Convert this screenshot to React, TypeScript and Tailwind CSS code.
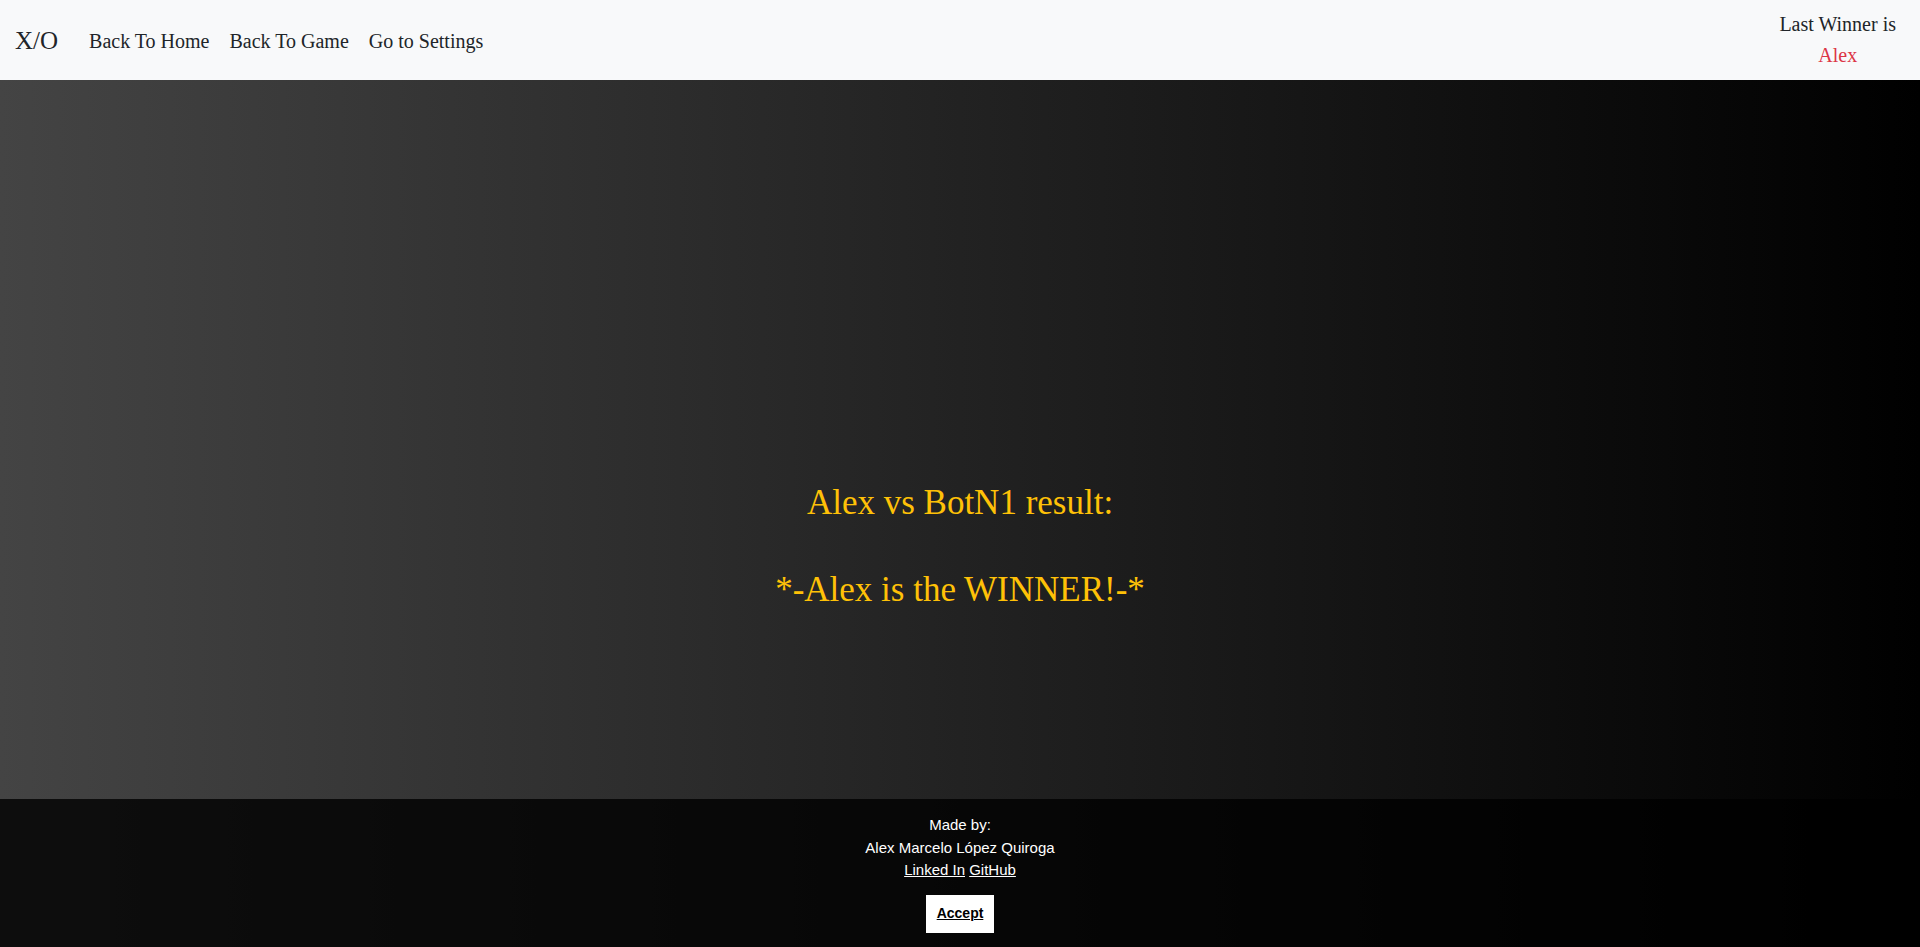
import React from "react";

export default function App() {
  return (
    <div className="w-full h-[947px] flex flex-col bg-[linear-gradient(to_right,#444444,#000000)] overflow-hidden">
      <nav className="w-full h-[80px] flex flex-row items-center justify-between bg-[#f8f9fa] px-[15px] font-['Liberation_Serif',serif] text-[#212529]">
        <div className="flex flex-row items-center">
          <span className="text-[25px] mr-[21px] pt-[1px]">X/O</span>
          <a className="text-[20px] px-[10px] pt-[1px]">Back To Home</a>
          <a className="text-[20px] px-[10px] pt-[1px]">Back To Game</a>
          <a className="text-[20px] px-[10px] pt-[1px]">Go to Settings</a>
        </div>
        <div className="flex flex-col items-center text-[20px] leading-[31px] pr-[9px]">
          <span>Last Winner is</span>
          <span className="text-[#dc3545]">Alex</span>
        </div>
      </nav>

      <main className="flex-1 flex flex-col items-center pt-[402px] font-['Liberation_Serif',serif] text-[#ffc107] text-[35px] leading-[42px]">
        <h2>Alex vs BotN1 result:</h2>
        <h2 className="mt-[45px]">*-Alex is the WINNER!-*</h2>
      </main>

      <footer className="w-full h-[148px] flex flex-col items-center bg-black/80 pt-[15px] font-['Liberation_Sans',Arial,sans-serif] text-white text-[15px] leading-[22.5px]">
        <p>Made by:</p>
        <p>Alex Marcelo López Quiroga</p>
        <p>
          <a className="underline">Linked In</a> <a className="underline">GitHub</a>
        </p>
        <button className="mt-[13px] w-[68px] h-[38px] bg-white text-black text-[14px] font-bold underline">
          Accept
        </button>
      </footer>
    </div>
  );
}
